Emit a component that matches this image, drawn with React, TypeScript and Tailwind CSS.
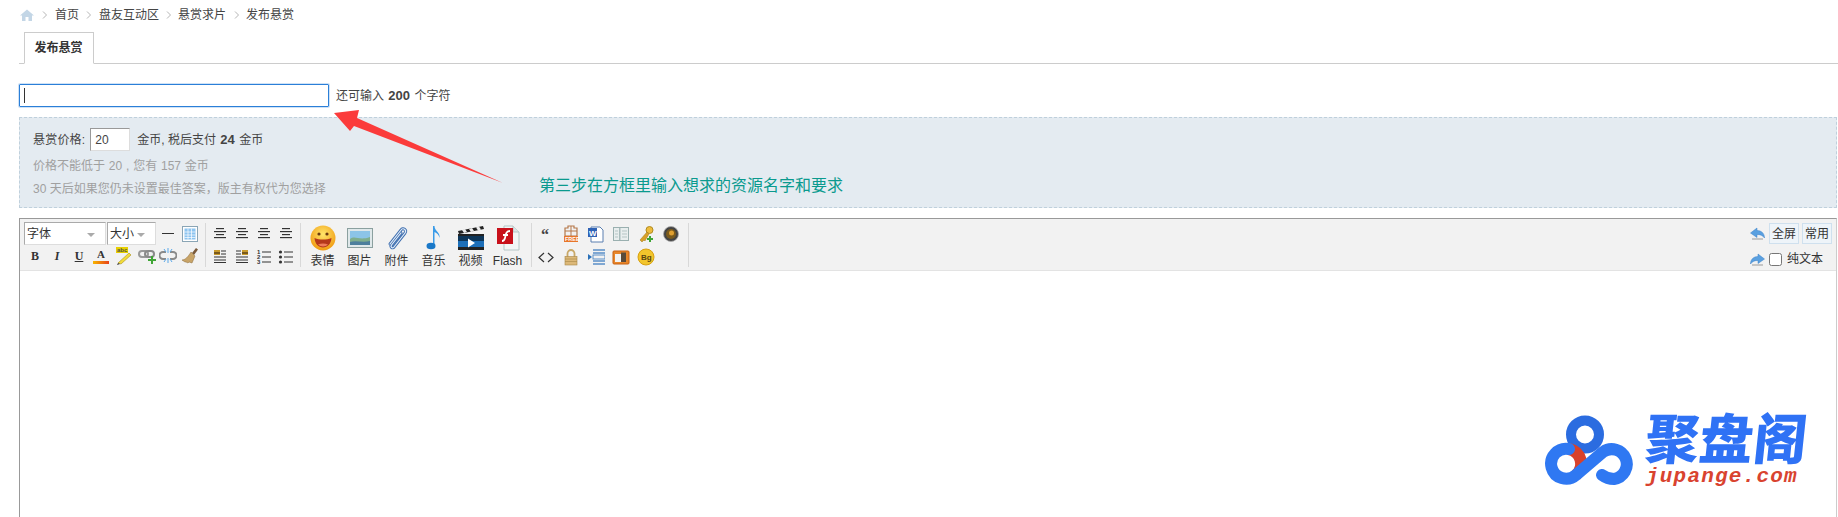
import type { ReactNode } from "react";

function Icon({ w = 20, h = 20, children }: { w?: number; h?: number; children: ReactNode }) {
  return (
    <svg width={w} height={h} viewBox={`0 0 ${w} ${h}`} className="block">
      {children}
    </svg>
  );
}

function Lines({ rows, x = 3 }: { rows: [number, number][]; x?: number }) {
  return (
    <g fill="#333">
      {rows.map(([y, len], i) => (
        <rect key={i} x={x + (12 - len) / 2} y={y} width={len} height="1" />
      ))}
      {rows.map(([y, len], i) => (
        <rect key={`s${i}`} x={x + (12 - len) / 2} y={y + 1} width={len} height="1" fill="#d0d0d0" />
      ))}
    </g>
  );
}

const alignIcons = [
  <g transform="translate(2 0)"><Lines rows={[[3, 8], [6, 12], [9, 8], [12, 12]]} x={1} /></g>,
  <g transform="translate(-2 0)"><Lines rows={[[3, 8], [6, 12], [9, 8], [12, 12]]} x={5} /></g>,
  <Lines rows={[[3, 8], [6, 12], [9, 8], [12, 12]]} />,
  <g transform="translate(2 0)"><Lines rows={[[3, 8], [6, 12], [9, 8], [12, 12]]} x={1} /></g>,
  <g>
    <rect x="3" y="2" width="6" height="5" fill="#c89a2c" />
    <rect x="3" y="4" width="6" height="2" fill="#7a5a1c" />
    <path d="M10 3h5M10 6h5M3 9h12M3 12h12M3 14.500h12" stroke="#333" fill="none" />
  </g>,
  <g>
    <rect x="9" y="2" width="6" height="5" fill="#c89a2c" />
    <rect x="9" y="4" width="6" height="2" fill="#7a5a1c" />
    <path d="M3 3h5M3 6h5M3 9h12M3 12h12M3 14.500h12" stroke="#333" fill="none" />
  </g>,
  <g>
    <text x="2" y="6" fontSize="6" fontWeight="700" fill="#333" fontFamily="Liberation Sans, sans-serif">1</text>
    <text x="2" y="11" fontSize="6" fontWeight="700" fill="#333" fontFamily="Liberation Sans, sans-serif">2</text>
    <text x="2" y="16" fontSize="6" fontWeight="700" fill="#333" fontFamily="Liberation Sans, sans-serif">3</text>
    <path d="M7 4h9M7 9h9M7 14h9" stroke="#333" fill="none" />
  </g>,
  <g>
    <circle cx="3.500" cy="4" r="1.600" fill="#333" />
    <circle cx="3.500" cy="9" r="1.600" fill="#333" />
    <circle cx="3.500" cy="14" r="1.600" fill="#333" />
    <path d="M7 4h9M7 9h9M7 14h9" stroke="#333" fill="none" />
  </g>,
];

function ToolCell({ className, children }: { className: string; children: ReactNode }) {
  return <div className={`flex items-center justify-center ${className}`}>{children}</div>;
}

function FakeSelect({ label, width }: { label: string; width: string }) {
  return (
    <div className={`flex h-[23px] items-center justify-between border border-[#aaa] border-r-[#ddd] border-b-[#ddd] bg-white pl-[2px] pr-[10px] text-[12px] text-[#333] ${width}`}>
      <span>{label}</span>
      <span className="mt-[2px] h-0 w-0 border-x-[4px] border-t-[4px] border-x-transparent border-t-[#aaa]" />
    </div>
  );
}

function FontGroup() {
  return (
    <div className="flex w-[181px] flex-col">
      <div className="flex h-[23px] items-center gap-px">
        <FakeSelect label="字体" width="w-[82px]" />
        <FakeSelect label="大小" width="w-[49px]" />
        <ToolCell className="w-[22px]">
          <div className="h-px w-[12px] bg-[#333]" />
        </ToolCell>
        <ToolCell className="w-[20px]">
          <Icon w={16} h={16}>
            <rect x=".5" y=".5" width="15" height="15" fill="#fff" stroke="#8aa5b5" />
            <rect x="2.500" y="2.500" width="11" height="11" fill="#8cc4f0" />
            <path d="M2.500 6h11M2.500 9h11M2.500 11.500h11M6 2.500v11M9.500 2.500v11" stroke="#fff" fill="none" strokeWidth=".7" />
          </Icon>
        </ToolCell>
      </div>
      <div className="flex h-[22px] items-center">
        <ToolCell className="w-[22px] font-['Liberation_Serif',serif] text-[12px] font-bold text-[#333]">B</ToolCell>
        <ToolCell className="w-[22px] font-['Liberation_Serif',serif] text-[12px] font-bold italic text-[#333]">I</ToolCell>
        <ToolCell className="w-[22px] font-['Liberation_Serif',serif] text-[12px] font-bold text-[#333] underline">U</ToolCell>
        <ToolCell className="w-[22px]">
          <div className="flex flex-col items-center">
            <span className="font-['Liberation_Serif',serif] text-[11px] font-bold leading-[11px] text-[#333]">A</span>
            <span className="mt-px h-[3px] w-[16px] bg-[linear-gradient(90deg,#f7b500,#e8431c)]" />
          </div>
        </ToolCell>
        <ToolCell className="w-[24px]">
          <Icon w={18} h={18}>
            <rect x="1" y="0" width="12" height="6" fill="#e8d000" />
            <text x="2" y="5" fontSize="6" fontWeight="700" fill="#554" fontFamily="Liberation Sans, sans-serif">abc</text>
            <path d="M3 16L14 6l2 2L6 17z" fill="#f2dc3a" stroke="#a89020" strokeWidth=".6" />
            <path d="M3 16l-1 2 3-1z" fill="#333" />
          </Icon>
        </ToolCell>
        <ToolCell className="w-[21px]">
          <Icon w={18} h={18}>
            <rect x="1" y="4" width="9" height="6" rx="3" fill="none" stroke="#9a9a9a" strokeWidth="2" />
            <rect x="7" y="4" width="9" height="6" rx="3" fill="none" stroke="#8a8a8a" strokeWidth="2" />
            <path d="M13 9h2v3h3v2h-3v3h-2v-3h-3v-2h3z" fill="#3fa535" />
          </Icon>
        </ToolCell>
        <ToolCell className="w-[21px]">
          <Icon w={18} h={18}>
            <path d="M7 5H4a3.500 3.500 0 000 7h3M11 5h3a3.500 3.500 0 010 7h-3" fill="none" stroke="#8a8a8a" strokeWidth="2" />
            <path d="M9 1v5M9 11v5M5 2l2 3M13 2l-2 3M5 15l2-3M13 15l-2-3" stroke="#5ba8e8" fill="none" />
          </Icon>
        </ToolCell>
        <ToolCell className="w-[24px]">
          <Icon w={18} h={18}>
            <path d="M11 6l4-5 2 1.500-4 5.500z" fill="#7a5a3a" />
            <path d="M10 5l4 4-3 7-3-1-1 1-2-1-1 0-3-2c3 0 6-3 9-8z" fill="#c8a468" stroke="#8a6a3a" strokeWidth=".5" />
          </Icon>
        </ToolCell>
      </div>
    </div>
  );
}

function AlignGroup() {
  return (
    <div className="grid w-[94px] grid-cols-[repeat(4,22px)] grid-rows-[23px_22px] pl-[3px]">
      {alignIcons.map((icon, i) => (
        <ToolCell key={i} className="h-full">
          <Icon w={18} h={17}>{icon}</Icon>
        </ToolCell>
      ))}
    </div>
  );
}

const clipPath = "M5 19L16 5c2-3 6 0 4 3L9 22c-1.500 2-4 0-2.500-2L16 8";

const mediaItems: { label: string; icon: ReactNode }[] = [
  {
    label: "表情",
    icon: (
      <Icon w={26} h={26}>
        <defs>
          <radialGradient id="smile" cx="50%" cy="35%" r="65%">
            <stop offset="0" stopColor="#ffe56a" />
            <stop offset="1" stopColor="#f09a10" />
          </radialGradient>
        </defs>
        <circle cx="13" cy="13" r="12.500" fill="url(#smile)" />
        <circle cx="9" cy="9" r="1.600" fill="#6b3a10" />
        <circle cx="17" cy="9" r="1.600" fill="#6b3a10" />
        <path d="M4.500 13c5 2 12 2 17 0-.5 6-4 9.500-8.500 9.500S5 19 4.500 13z" fill="#b5381a" />
        <path d="M8 19.500c3-1.500 7-1.500 10 0-2.500 2.500-7.500 2.500-10 0z" fill="#ef7d5a" />
      </Icon>
    ),
  },
  {
    label: "图片",
    icon: (
      <Icon w={26} h={22}>
        <rect x=".5" y="1.500" width="25" height="19" fill="#dfe8ea" stroke="#8ba09f" />
        <rect x="3" y="4" width="20" height="14" fill="#8cc4e8" />
        <path d="M3 12c5-4 9 2 20-2v8H3z" fill="#7fae8d" />
        <path d="M3 15c6-2 12 1 20-1v4H3z" fill="#4d7f9d" />
      </Icon>
    ),
  },
  {
    label: "附件",
    icon: (
      <Icon w={24} h={26}>
        <path d={clipPath} fill="none" stroke="#3f6fb0" strokeWidth="3" strokeLinecap="round" />
        <path d={clipPath} fill="none" stroke="#e3edf8" strokeWidth="1.200" strokeLinecap="round" />
      </Icon>
    ),
  },
  {
    label: "音乐",
    icon: (
      <Icon w={20} h={26}>
        <path d="M9 1h1.500c0 5 6 6 5 12-.5-3-2.500-5-5-6v13H9z" fill="#3a9be8" />
        <ellipse cx="7" cy="21" rx="4.500" ry="3.200" fill="#1a78c8" />
      </Icon>
    ),
  },
  {
    label: "视频",
    icon: (
      <Icon w={28} h={26}>
        <path d="M1 6l25-5 1 3-25 5z" fill="#222" />
        <path d="M5 5l3-1 2 3-3 1zM12 4l3-1 2 3-3 1zM19 2.500l3-1 2 3-3 1z" fill="#eee" />
        <rect x="1" y="9" width="26" height="3" fill="#222" />
        <rect x="1" y="11" width="26" height="14" fill="#1d6fb8" />
        <rect x="1" y="11" width="26" height="5" fill="#0d3558" />
        <rect x="1" y="22" width="26" height="3" fill="#222" />
        <path d="M11 13.500l7 4.500-7 4.500z" fill="#fff" />
      </Icon>
    ),
  },
  {
    label: "Flash",
    icon: (
      <Icon w={24} h={26}>
        <path d="M8 1h9l6 6v18H8z" fill="#f2f5f5" stroke="#b5c5c5" />
        <path d="M17 1v6h6" fill="#dce5e5" stroke="#b5c5c5" />
        <rect x="1" y="3" width="16" height="16" fill="#c8101a" />
        <path d="M14 6c-4 0-4 3-5 7-.5 2-1 3-3 3M7 10h5" fill="none" stroke="#fff" strokeWidth="1.800" />
      </Icon>
    ),
  },
];

function MediaGroup() {
  return (
    <div className="flex w-[230px] pl-[3px]">
      {mediaItems.map((item) => (
        <div key={item.label} className="flex h-[46px] w-[37px] flex-col items-center justify-between">
          <div className="flex h-[32px] items-center justify-center">{item.icon}</div>
          <span className="text-[12px] leading-[14px] text-[#333]">{item.label}</span>
        </div>
      ))}
    </div>
  );
}

const smallIcons: ReactNode[] = [
  <text x="4" y="15" fontSize="16" fontWeight="700" fill="#444" fontFamily="Liberation Serif, serif">“</text>,
  <g>
    <path d="M6 1h6v2h3v8H3V3h3z" fill="none" stroke="#b5784a" strokeWidth="1.200" />
    <path d="M9 1v10M3 6h12" stroke="#b5784a" />
    <rect x="2" y="11" width="14" height="6" fill="#e8762a" />
    <text x="3" y="16" fontSize="5.500" fontWeight="700" fill="#fff" fontFamily="Liberation Sans, sans-serif">FREE</text>
  </g>,
  <g>
    <path d="M4 2h9l3 3v12H4z" fill="#fff" stroke="#5a7fb0" />
    <rect x="1" y="3" width="9" height="9" fill="#2f62b5" />
    <text x="2" y="10.500" fontSize="8" fontWeight="700" fill="#fff" fontFamily="Liberation Sans, sans-serif">W</text>
  </g>,
  <g>
    <rect x="1.500" y="2.500" width="15" height="13" fill="#e8eeee" stroke="#9ab0b0" />
    <rect x="7" y="3" width="1.500" height="12" fill="#a8bcbc" />
    <path d="M3 6h3M3 9h3M3 12h3M10 6h5M10 9h5M10 12h5" stroke="#b5c5c5" />
  </g>,
  <g>
    <circle cx="12.500" cy="5" r="3.500" fill="#eebc3c" stroke="#b08a20" />
    <path d="M10 7l-7 8 2 2 2-2 1 1 1-2 3-5z" fill="#d8a028" stroke="#a07818" strokeWidth=".5" />
    <path d="M12 11h2v2h2v2h-2v2h-2v-2h-2v-2h2z" fill="#3fa535" />
  </g>,
  <g>
    <circle cx="9" cy="9" r="7.500" fill="#444" />
    <circle cx="9" cy="9" r="5" fill="#7a5a1c" />
    <circle cx="9.500" cy="8" r="2.500" fill="#e0a030" />
    <circle cx="9" cy="9" r="7.500" fill="none" stroke="#aaa" strokeWidth=".8" />
  </g>,
  <path d="M7 5L2 9.500 7 14M11 5l5 4.500L11 14" fill="none" stroke="#333" strokeWidth="1.200" />,
  <g>
    <path d="M5.500 9V5.500a3.500 3.500 0 017 0V9" fill="none" stroke="#c8a868" strokeWidth="1.800" />
    <rect x="3" y="8.500" width="12" height="8.500" fill="#dcb878" stroke="#a88848" strokeWidth=".6" />
    <path d="M3 11h12M3 13.500h12" stroke="#a88848" strokeWidth=".6" />
  </g>,
  <g>
    <path d="M6 2h12M6 5h12M6 13h12M6 16h12" stroke="#5a8fc8" strokeWidth="1.600" />
    <rect x="6" y="7" width="12" height="4" fill="none" stroke="#5a8fc8" />
    <path d="M1 6l4 3-4 3z" fill="#2a70b8" />
  </g>,
  <g>
    <rect x="1" y="3" width="16" height="13" rx="1" fill="#e8862a" stroke="#c86010" />
    <rect x="3" y="6" width="8" height="8" fill="#f2f2f2" />
    <rect x="9" y="4.500" width="5" height="9.500" fill="#5a4a3a" />
  </g>,
  <g>
    <circle cx="9" cy="9" r="8" fill="#f2c52c" stroke="#d8a010" />
    <text x="4" y="12" fontSize="8" fontWeight="700" fill="#5a4510" fontFamily="Liberation Sans, sans-serif">Bg</text>
  </g>,
];

function SmallGroup() {
  return (
    <div className="grid w-[156px] grid-cols-[repeat(6,25px)] grid-rows-[24px_22px] pl-[1px]">
      {smallIcons.map((icon, i) => (
        <ToolCell key={i} className="h-full">
          <Icon w={18} h={18}>{icon}</Icon>
        </ToolCell>
      ))}
    </div>
  );
}

function UndoArrow({ flip }: { flip?: boolean }) {
  return (
    <svg width="15" height="13" viewBox="0 0 15 13" className={flip ? "block -scale-x-100" : "block"}>
      <path d="M7 1L.5 6 7 10.500V7.500c3 0 5.500 .5 7.500 3.500 0-4.500-3-7.500-7.500-7.500z" fill="#5aa0e0" stroke="#3a80c8" strokeWidth=".5" />
      <path d="M2 12h11" stroke="#444" strokeWidth="1" opacity=".5" />
    </svg>
  );
}

function Toolbar() {
  return (
    <div className="flex h-[52px] items-center border-b border-[#e3e3e3] bg-[#f2f2f2] pl-[4px] pr-[4px]">
      <FontGroup />
      <div className="h-[44px] w-px bg-[#d8d8d8]" />
      <AlignGroup />
      <div className="h-[44px] w-px bg-[#d8d8d8]" />
      <MediaGroup />
      <div className="h-[44px] w-px bg-[#d8d8d8]" />
      <SmallGroup />
      <div className="h-[44px] w-px bg-[#d8d8d8]" />
      <div className="ml-auto mt-[4px] flex flex-col gap-[5px] self-start">
        <div className="flex h-[21px] items-center gap-[3px]">
          <UndoArrow />
          <span className="ml-[1px] flex h-[21px] w-[30px] items-center justify-center border border-[#cfe0ee] bg-[#eef4f9] text-[12px] text-[#333]">全屏</span>
          <span className="flex h-[21px] w-[30px] items-center justify-center border border-[#cfe0ee] bg-[#eef4f9] text-[12px] text-[#333]">常用</span>
        </div>
        <div className="flex h-[20px] items-center">
          <UndoArrow flip />
          <input type="checkbox" className="ml-[4px] h-[13px] w-[13px]" readOnly />
          <span className="ml-[5px] text-[12px] text-[#333]">纯文本</span>
        </div>
      </div>
    </div>
  );
}

function Sep() {
  return (
    <svg width="6" height="8" viewBox="0 0 6 8" className="block">
      <path d="M1 .5L4.500 4 1 7.500" fill="none" stroke="#b5b5b5" />
    </svg>
  );
}

function Breadcrumb() {
  return (
    <div className="flex h-[30px] items-center pl-[20px] text-[12px] text-[#444]">
      <svg width="14" height="12" viewBox="0 0 14 12" className="block">
        <path d="M7 .5L0 6.500h2V12h3.500V8h3v4H12V6.500h2z" fill="#c3d6e6" />
      </svg>
      <span className="ml-[8px]"><Sep /></span>
      <span className="ml-[7px]">首页</span>
      <span className="ml-[7px]"><Sep /></span>
      <span className="ml-[7px]">盘友互动区</span>
      <span className="ml-[7px]"><Sep /></span>
      <span className="ml-[6px]">悬赏求片</span>
      <span className="ml-[8px]"><Sep /></span>
      <span className="ml-[6px]">发布悬赏</span>
    </div>
  );
}

function Logo() {
  return (
    <div className="absolute left-[1545px] top-[415px] flex">
      <svg width="90" height="70" viewBox="0 0 90 70" className="block">
        <circle cx="40" cy="19.500" r="14" fill="none" stroke="#2b6ce0" strokeWidth="10" />
        <path d="M24 34A15 15 0 0 1 31 60" fill="none" stroke="#d8412a" strokeWidth="12" />
        <path
          d="M24 34A15 15 0 1 0 31 60L58 37A15 15 0 1 1 69 64C64 64 61 63 57 60"
          fill="none"
          stroke="#2f78f2"
          strokeWidth="12"
          strokeLinecap="round"
        />
      </svg>
      <div className="ml-[11px] flex flex-col">
        <span className="-mt-[10px] block -skew-x-6 whitespace-nowrap font-['Noto_Sans_CJK_SC',sans-serif] text-[54px] font-black leading-[62px] text-[#2f72f5]">聚盘阁</span>
        <span className="-mt-[2px] block whitespace-nowrap font-['Liberation_Mono',monospace] text-[21px] font-bold italic leading-[24px] tracking-[1.2px] text-[#d9432f]">jupange.com</span>
      </div>
    </div>
  );
}

export default function App() {
  return (
    <div className="relative h-[517px] w-[1838px] overflow-hidden bg-white font-['Liberation_Sans','Noto_Sans_CJK_SC',sans-serif] text-[12px] text-[#444]">
      <Breadcrumb />
      <div className="ml-[19px] mt-[2px] flex h-[32px] items-end border-b border-[#ccc] pl-[5px]">
        <div className="-mb-px flex h-[32px] w-[70px] items-center justify-center border border-b-white border-[#ccc] bg-white pr-[1px] font-bold text-[#333]">发布悬赏</div>
      </div>
      <div className="ml-[19px] mt-[20px] flex h-[23px] items-center">
        <div className="flex h-[23px] w-[310px] items-center rounded-[1px] border border-[#2b7fd8] pl-[4px] shadow-[0_0_0_1px_#cfe2f6]">
          <span className="h-[15px] w-px bg-[#333]" />
        </div>
        <span className="ml-[7px]">还可输入 <b className="mx-[1px] text-[13px]">200</b> 个字符</span>
      </div>
      <div className="ml-[19px] mr-[1px] mt-[10px] flex h-[91px] flex-col border border-dashed border-[#bfd0dc] bg-[#e4ebf1] pl-[13px] pt-[10px]">
        <div className="flex h-[23px] items-center">
          <span className="tracking-[.2px]">悬赏价格:</span>
          <input
            defaultValue="20"
            className="ml-[5px] h-[23px] w-[40px] border border-[#ddd] border-l-[#999] border-t-[#999] bg-white pl-[4px] text-[12px] text-[#444] outline-none"
          />
          <span className="ml-[7px]">金币, 税后支付 <b className="mx-[1px] text-[13px]">24</b> 金币</span>
        </div>
        <p className="mt-[7px] leading-[16px] text-[#a0a0a0] [word-spacing:.5px]">价格不能低于 20 , 您有 157 金币</p>
        <p className="mt-[7px] leading-[16px] text-[#a0a0a0]">30 天后如果您仍未设置最佳答案，版主有权代为您选择</p>
      </div>
      <div className="ml-[19px] mr-[1px] mt-[10px] h-[299px] border border-b-0 border-[#999] border-r-[#ccc]">
        <Toolbar />
      </div>
      <svg width="180" height="80" viewBox="0 0 180 80" className="absolute left-[330px] top-[108px]">
        <path d="M4 5L29 2 27 10 173 75 24 18 20 23z" fill="#fb3b3b" />
      </svg>
      <span className="absolute left-[539px] top-[176px] whitespace-nowrap text-[16px] leading-[20px] text-[#0a9a8e]">第三步在方框里输入想求的资源名字和要求</span>
      <Logo />
    </div>
  );
}
